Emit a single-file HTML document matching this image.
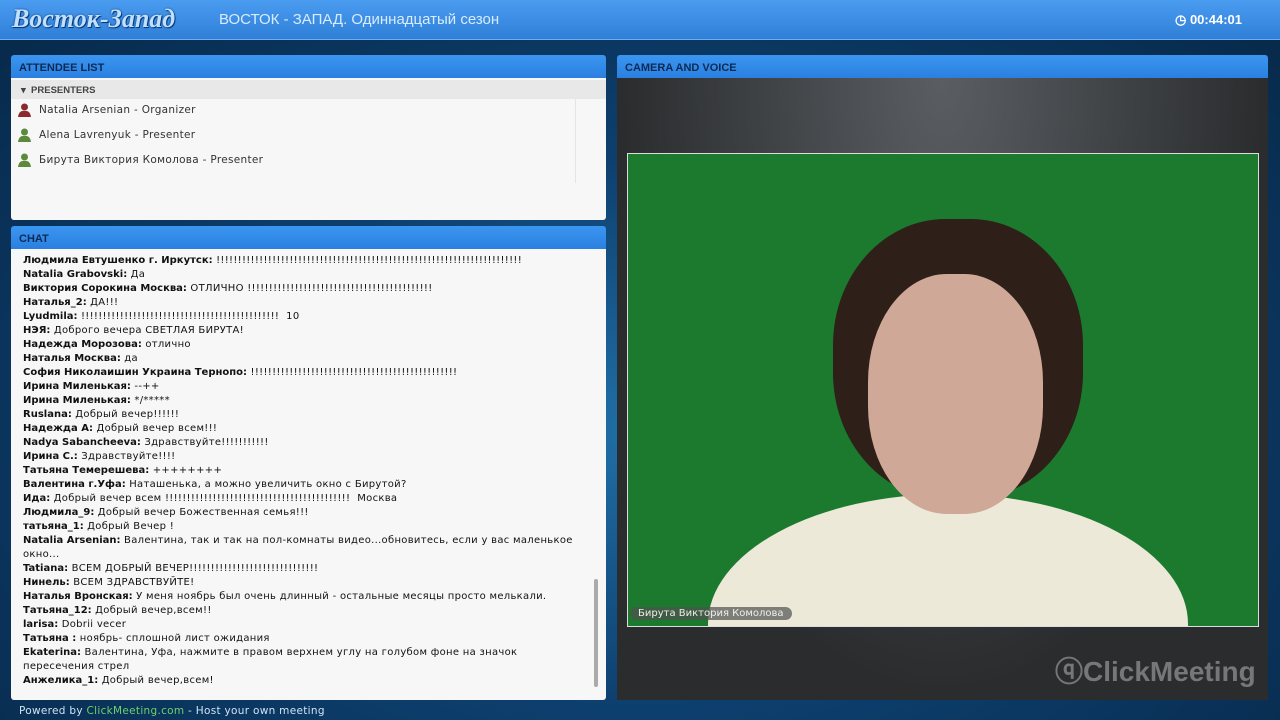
<!DOCTYPE html><html><head><meta charset="utf-8"><style>
*{margin:0;padding:0;box-sizing:border-box}
body{width:1280px;height:720px;overflow:hidden;position:relative;font-family:"DejaVu Sans","Liberation Sans",sans-serif;background:radial-gradient(ellipse at 50% 60%,#1f6fa8 0%,#0d3f6e 45%,#072848 100%)}
.hdr{position:absolute;left:0;top:0;width:1280px;height:40px;background:linear-gradient(#4a9cf0,#2f7fd8);border-bottom:1px solid #6ab0f0}
.logo{position:absolute;left:12px;top:4px;font:bold italic 26px "Liberation Serif",serif;color:#bfe0ff;text-shadow:0 0 2px #0a3a7a,1px 1px 0 #0a3a7a}
.title{position:absolute;left:219px;top:11px;font:15px "Liberation Sans","DejaVu Sans",sans-serif;color:#d8ecff}
.time{position:absolute;left:1175px;top:12px;font:bold 13px "Liberation Sans",sans-serif;color:#fff}
.ph{position:absolute;height:23px;background:linear-gradient(#3b96f0,#2a80e0);color:#0c2a55;font:bold 11px "Liberation Sans",sans-serif;padding:7px 8px;border-radius:3px 3px 0 0}
.pb{position:absolute;background:#f7f7f7}
.att div{position:absolute;left:28px;font-size:10.5px;color:#333;letter-spacing:.3px}
.ic{position:absolute;left:18px;width:13px;height:14px}
.chat{position:absolute;left:23px;top:254px;font-size:10px;line-height:14px;color:#111;width:565px;letter-spacing:.3px}
.chat b{font-weight:bold;letter-spacing:0}
</style></head><body>
<div class="hdr"><div class="logo">Восток-Запад</div><div class="title">ВОСТОК - ЗАПАД. Одиннадцатый сезон</div><div class="time">◷ 00:44:01</div></div>

<div class="ph" style="left:11px;top:55px;width:595px">ATTENDEE LIST</div>
<div class="pb" style="left:11px;top:78px;width:595px;height:142px;border-radius:0 0 3px 3px">
<div style="position:absolute;left:0;top:2px;width:595px;height:19px;background:#e8e8e8;font:bold 9.5px 'Liberation Sans',sans-serif;color:#444;padding:5px 0 0 10px">▾ &nbsp;PRESENTERS</div>
<div style="position:absolute;left:564px;top:21px;width:1px;height:84px;background:#e4e4e4"></div>
</div>
<div class="att">
<svg class="ic" style="top:103px" viewBox="0 0 13 14"><circle cx="6.5" cy="4" r="3.5" fill="#8a2a30"/><path d="M0 14 Q1 7 6.5 8 Q12 7 13 14Z" fill="#8a2a30"/></svg>
<svg class="ic" style="top:128px" viewBox="0 0 13 14"><circle cx="6.5" cy="4" r="3.5" fill="#5a8a3a"/><path d="M0 14 Q1 7 6.5 8 Q12 7 13 14Z" fill="#5a8a3a"/></svg>
<svg class="ic" style="top:153px" viewBox="0 0 13 14"><circle cx="6.5" cy="4" r="3.5" fill="#5a8a3a"/><path d="M0 14 Q1 7 6.5 8 Q12 7 13 14Z" fill="#5a8a3a"/></svg>
<div style="left:39px;top:104px">Natalia Arsenian - Organizer</div>
<div style="left:39px;top:129px">Alena Lavrenyuk - Presenter</div>
<div style="left:39px;top:154px">Бирута Виктория Комолова - Presenter</div>
</div>

<div class="ph" style="left:11px;top:226px;width:595px">CHAT</div>
<div class="pb" style="left:11px;top:249px;width:595px;height:451px;border-radius:0 0 3px 3px">
<div style="position:absolute;left:583px;top:330px;width:4px;height:108px;background:#aaa;border-radius:2px"></div></div>
<div class="chat">
<div><b>Людмила Евтушенко г. Иркутск:</b> !!!!!!!!!!!!!!!!!!!!!!!!!!!!!!!!!!!!!!!!!!!!!!!!!!!!!!!!!!!!!!!!!!!!!!!</div>
<div><b>Natalia Grabovski:</b> Да</div>
<div><b>Виктория Сорокина Москва:</b> ОТЛИЧНО !!!!!!!!!!!!!!!!!!!!!!!!!!!!!!!!!!!!!!!!!!!</div>
<div><b>Наталья_2:</b> ДА!!!</div>
<div><b>Lyudmila:</b> !!!!!!!!!!!!!!!!!!!!!!!!!!!!!!!!!!!!!!!!!!!!!!&nbsp; 10</div>
<div><b>НЭЯ:</b> Доброго вечера СВЕТЛАЯ БИРУТА!</div>
<div><b>Надежда Морозова:</b> отлично</div>
<div><b>Наталья Москва:</b> да</div>
<div><b>София Николаишин Украина Тернопо:</b> !!!!!!!!!!!!!!!!!!!!!!!!!!!!!!!!!!!!!!!!!!!!!!!!</div>
<div><b>Ирина Миленькая:</b> --++</div>
<div><b>Ирина Миленькая:</b> */*****</div>
<div><b>Ruslana:</b> Добрый вечер!!!!!!</div>
<div><b>Надежда А:</b> Добрый вечер всем!!!</div>
<div><b>Nadya Sabancheeva:</b> Здравствуйте!!!!!!!!!!!</div>
<div><b>Ирина С.:</b> Здравствуйте!!!!</div>
<div><b>Татьяна Темерешева:</b> ++++++++</div>
<div><b>Валентина г.Уфа:</b> Наташенька, а можно увеличить окно с Бирутой?</div>
<div><b>Ида:</b> Добрый вечер всем !!!!!!!!!!!!!!!!!!!!!!!!!!!!!!!!!!!!!!!!!!!&nbsp; Москва</div>
<div><b>Людмила_9:</b> Добрый вечер Божественная семья!!!</div>
<div><b>татьяна_1:</b> Добрый Вечер !</div>
<div><b>Natalia Arsenian:</b> Валентина, так и так на пол-комнаты видео...обновитесь, если у вас маленькое окно...</div>
<div><b>Tatiana:</b> ВСЕМ ДОБРЫЙ ВЕЧЕР!!!!!!!!!!!!!!!!!!!!!!!!!!!!!!</div>
<div><b>Нинель:</b> ВСЕМ ЗДРАВСТВУЙТЕ!</div>
<div><b>Наталья Вронская:</b> У меня ноябрь был очень длинный - остальные месяцы просто мелькали.</div>
<div><b>Татьяна_12:</b> Добрый вечер,всем!!</div>
<div><b>larisa:</b> Dobrii vecer</div>
<div><b>Татьяна :</b> ноябрь- сплошной лист ожидания</div>
<div><b>Ekaterina:</b> Валентина, Уфа, нажмите в правом верхнем углу на голубом фоне на значок пересечения стрел</div>
<div><b>Анжелика_1:</b> Добрый вечер,всем!</div>
</div>
<div style="position:absolute;left:19px;top:705px;font-size:10.5px;color:#cfe4f5;letter-spacing:.3px">Powered by <span style="color:#6fd06f">ClickMeeting.com</span> - Host your own meeting</div>

<div class="ph" style="left:617px;top:55px;width:651px">CAMERA AND VOICE</div>
<div style="position:absolute;left:617px;top:78px;width:651px;height:622px;background:radial-gradient(ellipse at 50% 0%,#5a5e62,#2a2c2e 70%)"></div>
<div style="position:absolute;left:627px;top:153px;width:632px;height:474px;border:1px solid #ddd;background:#1b7a2e;overflow:hidden">
<div style="position:absolute;left:80px;top:340px;width:480px;height:260px;border-radius:50% 50% 0 0;background:#ece9d8"></div>
<div style="position:absolute;left:205px;top:65px;width:250px;height:280px;border-radius:45%;background:#2e2018"></div>
<div style="position:absolute;left:240px;top:120px;width:175px;height:240px;border-radius:45%;background:#d0a898"></div>
<div style="position:absolute;left:2px;top:453px;padding:1px 8px;background:rgba(80,80,80,.7);color:#eee;font-size:10px;border-radius:8px">Бирута Виктория Комолова</div>
</div>
<div style="position:absolute;left:1055px;top:650px;font:bold 28px 'Liberation Sans',sans-serif;color:#777">ⓠClickMeeting</div>
</body></html>
